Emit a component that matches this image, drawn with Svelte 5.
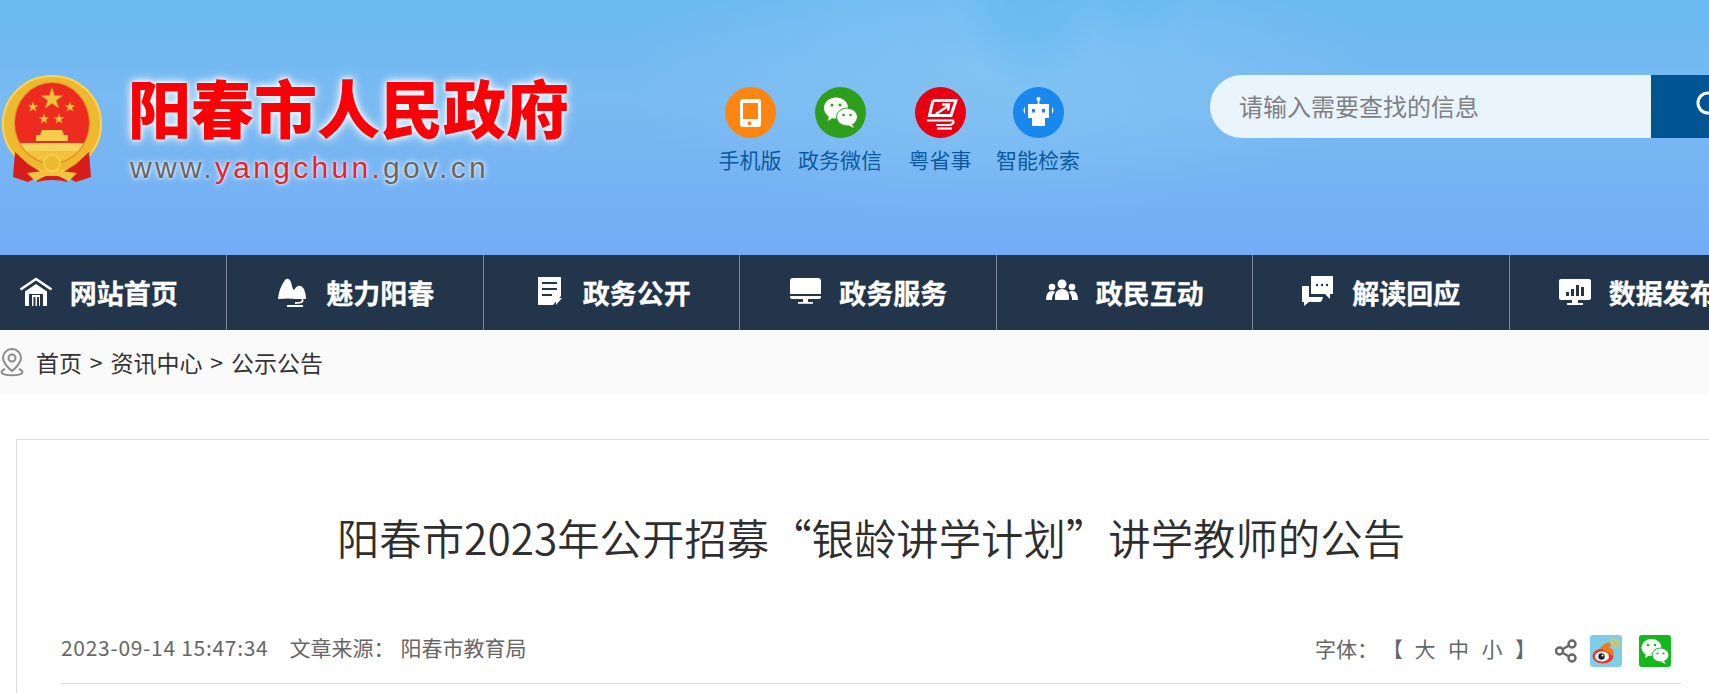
<script>
  const apps = [
    { label: '手机版', cls: 'orange', kind: 'phone' },
    { label: '政务微信', cls: 'green', kind: 'wechat' },
    { label: '粤省事', cls: 'red', kind: 'yue' },
    { label: '智能检索', cls: 'blue', kind: 'robot' }
  ];
  const nav = [
    { label: '网站首页', kind: 'home' },
    { label: '魅力阳春', kind: 'hill' },
    { label: '政务公开', kind: 'doc' },
    { label: '政务服务', kind: 'screen' },
    { label: '政民互动', kind: 'people' },
    { label: '解读回应', kind: 'chat' },
    { label: '数据发布', kind: 'chart' }
  ];
  const starPath = 'M0 -10 L2.35 -3.1 L9.5 -3.1 L3.8 1.2 L5.9 8.1 L0 3.9 L-5.9 8.1 L-3.8 1.2 L-9.5 -3.1 L-2.35 -3.1 Z';
</script>

<div class="page">
  <header class="masthead">
    <div class="brand">
      <svg class="emblem" viewBox="0 0 104 112" aria-hidden="true">
        <defs>
          <clipPath id="inner"><ellipse cx="52" cy="49" rx="37" ry="40" /></clipPath>
        </defs>
        <ellipse cx="52" cy="50" rx="50" ry="49" fill="#efb92f" />
        <ellipse cx="52" cy="50" rx="49" ry="48" fill="none" stroke="#f7d45c" stroke-width="2" />
        <ellipse cx="52" cy="49" rx="38" ry="41" fill="#d9962a" />
        <ellipse cx="52" cy="49" rx="37" ry="40" fill="#ee2b1f" />
        <g fill="#f0c13c" stroke="#b98a24" stroke-width="0.5">
          <path d={starPath} transform="translate(52 25) scale(1.15)" />
          <path d={starPath} transform="translate(33 33) scale(.55)" />
          <path d={starPath} transform="translate(70 33) scale(.55)" />
          <path d={starPath} transform="translate(44 45) scale(.55)" />
          <path d={starPath} transform="translate(59 45) scale(.55)" />
        </g>
        <g clip-path="url(#inner)">
          <path d="M42 56 H62 L64 61 H68 V67 H36 V61 H40 Z" fill="#f6cd4a" />
          <rect x="14" y="69" width="76" height="8" fill="#f7d45c" />
          <rect x="14" y="77" width="76" height="14" fill="#f3c23a" />
        </g>
        <path d="M15 78 L13 103 L28 108 L44 100 L28 90 Z" fill="#d61d1a" />
        <path d="M89 78 L91 103 L76 108 L60 100 L76 90 Z" fill="#d61d1a" />
        <path d="M36 108 L44 100 H60 L68 108 Q52 104 36 108 Z" fill="#d61d1a" />
        <path d="M27 99 L43 97 Q48 92 52 92 Q56 92 61 97 L77 99 L69 107 L58 102 H46 L35 107 Z" fill="#f2c33c" />
        <circle cx="52" cy="89" r="8" fill="#edb92f" stroke="#f7d45c" stroke-width="1.500" />
      </svg>
      <div class="brand-text">
        <div class="site-name">阳春市人民政府</div>
        <div class="domain">www.<span>yangchun.</span>gov.cn</div>
      </div>
    </div>

    <ul class="apps">
      {#each apps as a}
        <li class="app">
          <span class="badge {a.cls}">
            {#if a.kind === 'phone'}
              <svg viewBox="0 0 51 51"><path fill-rule="evenodd" d="M18 12h15a3 3 0 0 1 3 3v22a3 3 0 0 1-3 3H18a3 3 0 0 1-3-3V15a3 3 0 0 1 3-3Zm0 4v16h15V16Zm7.500 18.500a2 2 0 1 0 0 3.500a2 2 0 0 0 0-3.500Z" fill="#fff"/></svg>
            {:else if a.kind === 'wechat'}
              <svg viewBox="0 0 51 51"><ellipse cx="21" cy="21" rx="12" ry="10.500" fill="#fff"/><path d="M14 28l-1 6 6-4Z" fill="#fff"/><ellipse cx="32" cy="30" rx="10.500" ry="9" fill="#fff" stroke="#2d9f1c" stroke-width="1"/><path d="M37 37l2 4-6-3Z" fill="#fff"/><circle cx="17" cy="18" r="1.500" fill="#2d9f1c"/><circle cx="25" cy="18" r="1.500" fill="#2d9f1c"/><circle cx="28.500" cy="28" r="1.300" fill="#2d9f1c"/><circle cx="35.500" cy="28" r="1.300" fill="#2d9f1c"/></svg>
            {:else if a.kind === 'yue'}
              <svg viewBox="0 0 51 51"><g fill="none" stroke="#fff"><path d="M18 13.500h23l-5 15H14.500L18 13.500" stroke-width="3" stroke-linejoin="miter"/><path d="M21 27l12-8M27 17.500h7l-1 6" stroke-width="2.400"/><path d="M12 33.500h26q2 3-3 4.500H21" stroke-width="2.200"/><path d="M22 41.500h15" stroke-width="2.200"/></g></svg>
            {:else}
              <svg viewBox="0 0 51 51"><g fill="#fff"><circle cx="25.500" cy="12" r="2"/><rect x="24.700" y="13" width="1.600" height="4"/><path d="M15 17h21v14H15Z"/><path d="M19 31h13v8H19Z"/><path d="M12 20q-3 3 0 7Zm27 0q3 3 0 7Z"/></g><rect x="19" y="22" width="3" height="3.500" fill="#1888ee"/><rect x="29" y="22" width="3" height="3.500" fill="#1888ee"/></svg>
            {/if}
          </span>
          <span class="app-label">{a.label}</span>
        </li>
      {/each}
    </ul>

    <form class="search">
      <div class="search-input">请输入需要查找的信息</div>
      <div class="search-btn">
        <svg viewBox="0 0 40 40" width="40" height="40"><circle cx="17" cy="17" r="10" fill="none" stroke="#fff" stroke-width="3"/><path d="M24 24l8 8" stroke="#fff" stroke-width="3"/></svg>
      </div>
    </form>
  </header>

  <nav class="mainnav">
    {#each nav as n}
      <a class="nav-item">
        <svg class="nav-icon" viewBox="0 0 34 34">
          {#if n.kind === 'home'}
            <path d="M1.500 15.500 L17 5 L32.500 15.500" fill="none" stroke="#fff" stroke-width="2.600"/>
            <path fill="#fff" fill-rule="evenodd" d="M17 10l11 7.500V32H6V17.500Zm-7 10V32h3V21h8v11h3V20Zm4.500 3v9h2v-9Zm3.500 0v9h2v-9Z"/>
          {:else if n.kind === 'hill'}
            <path fill="#fff" d="M3 25 Q4 14 10 6 Q15 2 17 12 Q18 16 19 16 Q24 8 29 15 Q31 20 31 25 H21 Q14 24 3 25Z"/>
            <path fill="none" stroke="#fff" stroke-width="1.800" d="M27 25 Q30 29 20 29 M12 32 H28"/>
          {:else if n.kind === 'doc'}
            <path fill="#fff" fill-rule="evenodd" d="M6 3h23v19l-8 9H6Zm4 5v2h15V8Zm0 6v2h15v-2Zm0 6v2h10v-2Z"/>
            <path fill="#fff" d="M24 24h6l-6 7Z"/>
          {:else if n.kind === 'screen'}
            <path fill="#fff" d="M5 4h25a3 3 0 0 1 3 3v13H2V7a3 3 0 0 1 3-3Z"/>
            <path fill="#fff" d="M2 22h31v1a2 2 0 0 1-2 2H4a2 2 0 0 1-2-2Z"/>
            <path fill="#fff" d="M15 25h5v3h-5ZM10 28h15v1.800H10Z"/>
          {:else if n.kind === 'people'}
            <g fill="#fff"><circle cx="17" cy="10" r="4.500"/><path d="M10 26q-1-11 7-11t7 11Z"/><circle cx="7" cy="13" r="3.300"/><path d="M1 26q0-9 6-9 2 0 3 1-3 3-3 8Z"/><circle cx="27" cy="13" r="3.300"/><path d="M33 26q0-9-6-9-2 0-3 1 3 3 3 8Z"/></g>
          {:else if n.kind === 'chat'}
            <path fill="#fff" d="M10 2h22v18h-3v5l-5-5h-14Z"/>
            <g fill="#22354a"><circle cx="16" cy="11" r="1.200"/><circle cx="21" cy="11" r="1.200"/><circle cx="26" cy="11" r="1.200"/></g>
            <path fill="#fff" d="M1 12h7v11h14q-1 5-3 5H8l-5 4v-4H1Z"/>
          {:else}
            <path fill="#fff" d="M3 5h28a2 2 0 0 1 2 2v17a2 2 0 0 1-2 2H3a2 2 0 0 1-2-2V7a2 2 0 0 1 2-2Z"/>
            <g fill="#22354a"><rect x="8" y="18" width="3" height="4"/><rect x="13" y="15" width="3" height="7"/><rect x="18" y="11" width="3" height="11"/><rect x="23" y="13" width="3" height="9"/></g>
            <path fill="#fff" d="M14 26h6v3h-6ZM9 29h16v2H9Z"/>
          {/if}
        </svg>
        <span>{n.label}</span>
      </a>
    {/each}
  </nav>

  <div class="crumbs">
    <svg class="pin" viewBox="0 0 24 30"><path d="M12 2a9 9 0 0 1 9 9c0 6-9 13-9 13S3 17 3 11a9 9 0 0 1 9-9Z" fill="none" stroke="#8a8a8a" stroke-width="2"/><circle cx="12" cy="11" r="3.500" fill="none" stroke="#8a8a8a" stroke-width="2"/><path d="M5 22c-3 1-4 3-3 4 2 3 18 3 20 0 1-1 0-3-3-4" fill="none" stroke="#8a8a8a" stroke-width="2"/></svg>
    <span class="trail">首页 &gt; 资讯中心 &gt; 公示公告</span>
  </div>

  <main class="card">
    <h1>阳春市2023年公开招募“银龄讲学计划”讲学教师的公告</h1>
    <div class="meta">
      <div class="meta-left">
        <span class="stamp">2023-09-14 15:47:34</span>
        <span class="src-label">文章来源：</span>
        <span>阳春市教育局</span>
      </div>
      <div class="meta-right">
        <span class="lift">字体：</span>
        <span class="sizes lift"><i>【</i><i>大</i><i>中</i><i>小</i><i>】</i></span>
        <svg class="share" viewBox="0 0 22 24"><g fill="none" stroke="#666" stroke-width="2.400"><circle cx="17" cy="5" r="3.500"/><circle cx="4.500" cy="12" r="3.500"/><circle cx="17" cy="19" r="3.500"/><path d="M8 10l6-3.500M8 14l6 3.500"/></g></svg>
        <svg class="sq" viewBox="0 0 32 32">
          <rect width="32" height="32" rx="3" fill="#7fcde6"/>
          <ellipse cx="13" cy="21" rx="10.500" ry="7.500" fill="#e8352a"/>
          <path d="M10 13q7-7 10-5 2 2-1 5 6 0 4 8" fill="#ee7a1e"/>
          <ellipse cx="12" cy="21.500" rx="7" ry="5" fill="#fff"/>
          <circle cx="11.500" cy="21.500" r="3.200" fill="#222"/>
          <circle cx="12.500" cy="20.500" r="1" fill="#fff"/>
          <path d="M21 4q8 1 8 9M21 8q4 1 4 5" fill="none" stroke="#f4c430" stroke-width="2"/>
        </svg>
        <svg class="sq" viewBox="0 0 32 32">
          <rect width="32" height="32" rx="3" fill="#12b81c"/>
          <ellipse cx="12.500" cy="12.500" rx="10" ry="8.500" fill="#fff"/>
          <path d="M7 18l-1 5 5-3Z" fill="#fff"/>
          <ellipse cx="21.500" cy="20" rx="8.500" ry="7" fill="#fff" stroke="#12b81c"/>
          <path d="M25 26l2 3-5-2Z" fill="#fff"/>
          <circle cx="9" cy="10" r="1.300" fill="#12b81c"/><circle cx="16" cy="10" r="1.300" fill="#12b81c"/>
          <circle cx="18.500" cy="18.500" r="1.100" fill="#12b81c"/><circle cx="24.500" cy="18.500" r="1.100" fill="#12b81c"/>
        </svg>
      </div>
    </div>
  </main>
</div>

<style>
  :global(body) { margin: 0; background: #fff; }
  .page {
    width: 1709px; height: 693px; overflow: hidden;
    font-family: "Noto Sans CJK SC", "Noto Sans", sans-serif; color: #333;
  }
  .masthead {
    height: 255px; box-sizing: border-box; display: flex; align-items: flex-start;
    background:
      radial-gradient(ellipse 70px 95px at 1030px 0px, rgba(92,182,241,.5), rgba(92,182,241,.35) 55%, transparent 100%),
      radial-gradient(ellipse 55px 50px at 1132px 0px, rgba(92,182,241,.4), transparent 100%),
      radial-gradient(ellipse 380px 150px at 1000px 70px, rgba(135,198,243,.75), transparent 100%),
      linear-gradient(180deg, #6ab9f1 0%, #79baf1 40%, #73acf6 100%);
  }
  .brand { display: flex; width: 690px; flex: none; padding-top: 74px; }
  .emblem { width: 104px; height: 112px; margin-right: 24px; flex: none; }
  .site-name {
    margin-top: -4px;
    font-size: 63px; line-height: 72px; font-weight: 900; color: #fa0007; white-space: nowrap;
    text-shadow: 0 0 3px #fff, 0 0 7px #fff, 0 0 12px #e6f4ff;
  }
  .domain {
    margin: 9px 0 0 2px; font-family: "Liberation Sans", sans-serif; font-size: 30px; line-height: 34px;
    letter-spacing: 3.3px; color: #666; white-space: nowrap;
    text-shadow: 0 0 3px #fff, 0 0 7px #e6f4ff;
  }
  .domain span { color: #e8212b; }
  .apps {
    list-style: none; margin: 0; padding: 87px 0 0; width: 520px; flex: none; display: flex;
  }
  .app { display: flex; flex-direction: column; align-items: center; width: 90px; }
  .app:nth-child(1) { margin-left: 15px; }
  .app:nth-child(3) { margin-left: 10px; }
  .app:nth-child(4) { margin-left: 8px; }
  .badge { width: 51px; height: 51px; border-radius: 50%; display: block; }
  .badge svg { display: block; width: 51px; height: 51px; }
  .orange { background: #ff8511; }
  .green { background: #2d9f1c; }
  .red { background: #e60012; }
  .blue { background: #1888ee; }
  .app-label { margin-top: 6px; font-size: 21px; line-height: 30px; color: #0b5a9e; white-space: nowrap; }
  .search { display: flex; height: 63px; margin-top: 75px; flex: none; }
  .search-input {
    width: 441px; box-sizing: border-box; padding-left: 29px; background: #e9f4fd;
    border-radius: 32px 0 0 32px; font-size: 24px; line-height: 61px; color: #808080;
  }
  .search-btn { width: 120px; background: #005592; padding: 11px 0 0 40px; box-sizing: border-box; }
  .mainnav { display: flex; height: 75px; margin-left: -29.5px; background: #22354a; width: 1800px; }
  .nav-item {
    width: 256.5px; flex: none; box-sizing: border-box; border-right: 1px solid #7d8896;
    display: flex; align-items: center; justify-content: center; gap: 17px;
    color: #fff; font-size: 27px; font-weight: 700; -webkit-text-stroke: .3px #fff;
  }
  .nav-icon { width: 34px; height: 34px; flex: none; margin-top: -4px; }
  .crumbs {
    height: 64px; background: #fafafa; display: flex; align-items: center; gap: 12px;
    font-size: 23px; color: #333;
  }
  .trail { word-spacing: 2.700px; }
  .pin { width: 24px; height: 30px; flex: none; }
  .card {
    margin: 45px 0 0 16px; width: 1800px; box-sizing: border-box; border: 1px solid #ddd;
    padding: 0 0 0 44px; height: 400px;
  }
  h1 {
    margin: 0; width: 1620px; padding-top: 62px; height: 131px;
    text-align: center; font-size: 42.4px; line-height: 70px; font-weight: 350; color: #2e2e2e;
  }
  .meta {
    width: 1620px; height: 50px; display: flex; justify-content: space-between; align-items: flex-start;
    border-bottom: 1px solid #ddd; color: #666; font-size: 21px;
  }
  .meta-left { display: flex; line-height: 28px; }
  .stamp { letter-spacing: .7px; margin-right: 21px; }
  .src-label { width: 111px; }
  .meta-right { display: flex; align-items: center; height: 32px; padding: 2px 10px 0 0; line-height: 30px; }
  .lift { margin-top: -6px; }
  .sizes { display: flex; gap: 12.500px; margin-left: 4px; margin-right: 19px; }
  .sizes i { font-style: normal; width: 21px; }
  .sizes i:first-child { margin-right: -1px; }
  .share { width: 22px; height: 24px; margin-right: 13px; }
  .sq { width: 32px; height: 32px; margin-right: 17px; }
  .sq:last-child { margin-right: 0; }
</style>
